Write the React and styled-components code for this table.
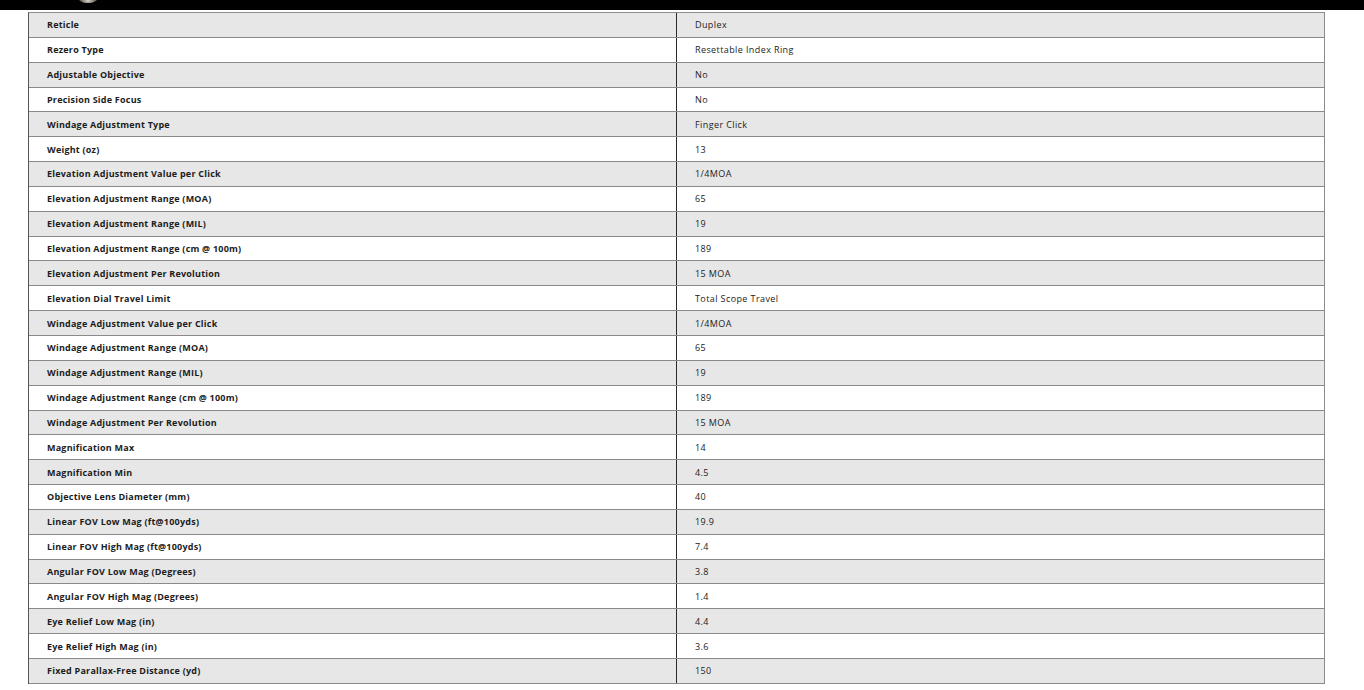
import styled, { createGlobalStyle } from "styled-components";

const GlobalStyle = createGlobalStyle`
  html, body {
    margin: 0;
    padding: 0;
    background: #ffffff;
  }
  body {
    font-family: "Open Sans", "Liberation Sans", sans-serif;
  }
`;

const TopBar = styled.div`
  height: 10px;
  background: #000;
  position: relative;
  overflow: hidden;
`;

const Glint = styled.div`
  position: absolute;
  left: 78px;
  top: -8px;
  width: 20px;
  height: 11px;
  border-radius: 50%;
  background: radial-gradient(ellipse at 50% 75%, #d9d4cc 0%, #6e6860 50%, #000 100%);
`;

const Page = styled.div`
  padding: 2px 39px 0 28px;
`;

const Table = styled.div`
  border: 1px solid #8c8c8c;
  border-left-color: #555;
  border-bottom: none;
`;

const Row = styled.div`
  display: grid;
  grid-template-columns: 648px 1fr;
  height: 24.85px;
  box-sizing: border-box;
  border-bottom: 1px solid #8a8a8a;
  background: ${(p) => (p.shaded ? "#e7e7e7" : "#ffffff")};
`;

const Label = styled.div`
  display: flex;
  align-items: center;
  padding-left: 18px;
  border-right: 1px solid #2a2a2a;
  font-size: 9px;
  font-weight: 700;
  color: #1c1c1c;
  letter-spacing: 0.22px;
  white-space: nowrap;
`;

const Value = styled.div`
  display: flex;
  align-items: center;
  padding-left: 18px;
  font-size: 9px;
  font-weight: 400;
  color: #222;
  letter-spacing: 0.4px;
  white-space: nowrap;
`;

const specs = [
  ["Reticle", "Duplex"],
  ["Rezero Type", "Resettable Index Ring"],
  ["Adjustable Objective", "No"],
  ["Precision Side Focus", "No"],
  ["Windage Adjustment Type", "Finger Click"],
  ["Weight (oz)", "13"],
  ["Elevation Adjustment Value per Click", "1/4MOA"],
  ["Elevation Adjustment Range (MOA)", "65"],
  ["Elevation Adjustment Range (MIL)", "19"],
  ["Elevation Adjustment Range (cm @ 100m)", "189"],
  ["Elevation Adjustment Per Revolution", "15 MOA"],
  ["Elevation Dial Travel Limit", "Total Scope Travel"],
  ["Windage Adjustment Value per Click", "1/4MOA"],
  ["Windage Adjustment Range (MOA)", "65"],
  ["Windage Adjustment Range (MIL)", "19"],
  ["Windage Adjustment Range (cm @ 100m)", "189"],
  ["Windage Adjustment Per Revolution", "15 MOA"],
  ["Magnification Max", "14"],
  ["Magnification Min", "4.5"],
  ["Objective Lens Diameter (mm)", "40"],
  ["Linear FOV Low Mag (ft@100yds)", "19.9"],
  ["Linear FOV High Mag (ft@100yds)", "7.4"],
  ["Angular FOV Low Mag (Degrees)", "3.8"],
  ["Angular FOV High Mag (Degrees)", "1.4"],
  ["Eye Relief Low Mag (in)", "4.4"],
  ["Eye Relief High Mag (in)", "3.6"],
  ["Fixed Parallax-Free Distance (yd)", "150"],
];

export default function App() {
  return (
    <>
      <GlobalStyle />
      <TopBar>
        <Glint />
      </TopBar>
      <Page>
        <Table>
          {specs.map(([label, value], i) => (
            <Row key={label} shaded={i % 2 === 0}>
              <Label>{label}</Label>
              <Value>{value}</Value>
            </Row>
          ))}
        </Table>
      </Page>
    </>
  );
}
